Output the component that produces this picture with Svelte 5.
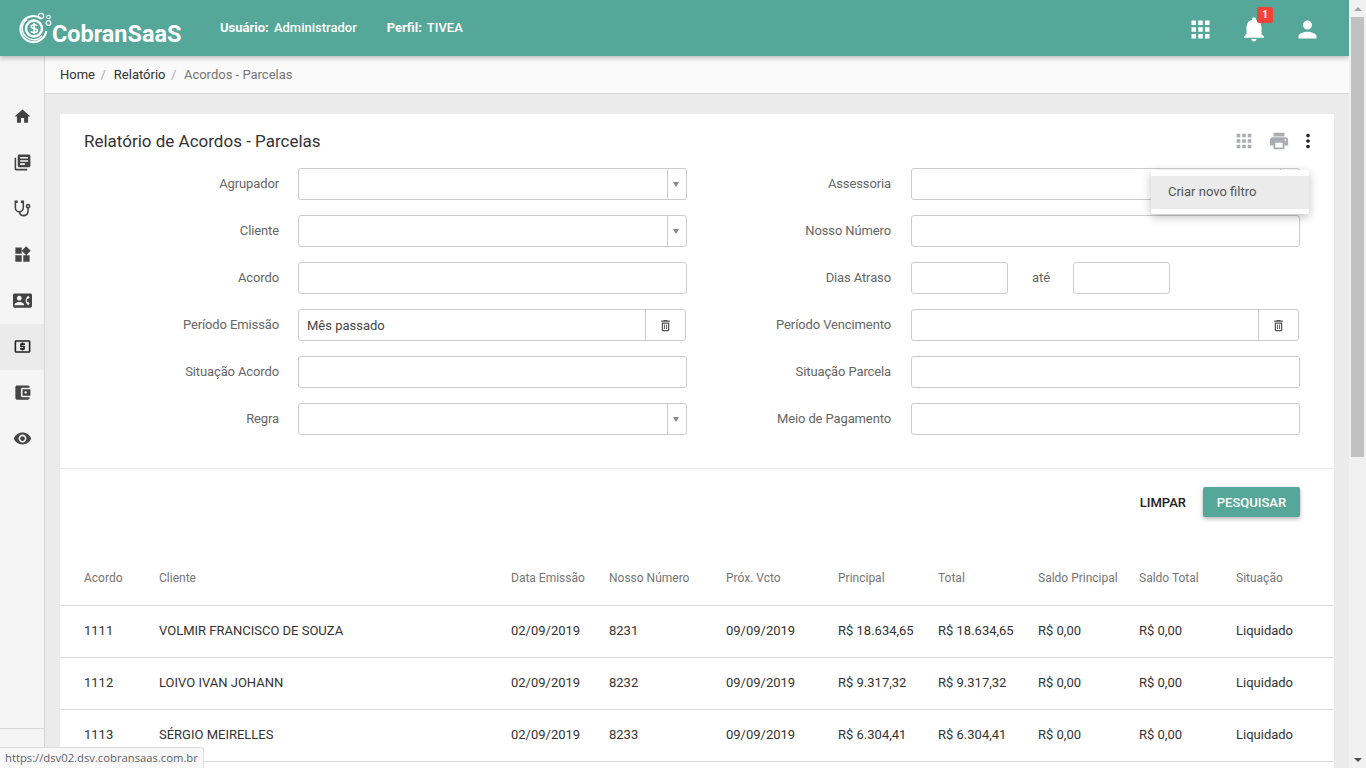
<script>
  const ic = {
    home: 'M10 20v-6h4v6h5v-8h3L12 3 2 12h3v8z',
    books: 'M4 6H2v14c0 1.1.9 2 2 2h14v-2H4V6zm16-4H8c-1.1 0-2 .9-2 2v12c0 1.1.9 2 2 2h12c1.1 0 2-.9 2-2V4c0-1.1-.9-2-2-2zm-1 9H9V9h10v2zm-4 4H9v-2h6v2zm4-8H9V5h10v2z',
    stethoscope: 'M19,8C19.56,8 20,8.43 20,9A1,1 0 0,1 19,10C18.43,10 18,9.55 18,9C18,8.43 18.43,8 19,8M2,2V11C2,13.96 4.19,16.5 7.14,16.91C7.76,19.92 10.42,22 13.5,22A6.5,6.5 0 0,0 20,15.5V11.81C21.16,11.39 22,10.29 22,9A3,3 0 0,0 19,6A3,3 0 0,0 16,9C16,10.29 16.84,11.4 18,11.81V15.41C18,17.91 16,19.91 13.5,19.91C11.5,19.91 9.82,18.7 9.22,16.9C12,16.3 14,13.8 14,11V2H10V5H12V11A4,4 0 0,1 8,15A4,4 0 0,1 4,11V5H6V2H2Z',
    widgets: 'M13 13v8h8v-8h-8zM3 21h8v-8H3v8zM3 3v8h8V3H3zm13.66-1.31L11 7.34 16.66 13l5.66-5.66-5.66-5.65z',
    contact: 'M22 3H2C.9 3 0 3.9 0 5v14c0 1.1.9 2 2 2h20c1.1 0 1.99-.9 1.99-2L24 5c0-1.1-.9-2-2-2zM8 6c1.66 0 3 1.34 3 3s-1.34 3-3 3-3-1.34-3-3 1.34-3 3-3zm6 12H2v-1c0-2 4-3.1 6-3.1s6 1.1 6 3.1v1zm3.85-4h1.64L21 16l-1.99 1.99c-1.31-.98-2.28-2.38-2.73-3.99-.18-.64-.28-1.31-.28-2s.1-1.36.28-2c.45-1.62 1.42-3.01 2.73-3.99L21 8l-1.51 2h-1.64c-.22.63-.35 1.3-.35 2s.13 1.37.35 2z',
    atm: 'M11 17h2v-1h1c.55 0 1-.45 1-1v-3c0-.55-.45-1-1-1h-3v-1h4V8h-2V7h-2v1h-1c-.55 0-1 .45-1 1v3c0 .55.45 1 1 1h3v1H9v2h2v1zm9-13H4c-1.11 0-1.99.89-1.99 2L2 18c0 1.11.89 2 2 2h16c1.11 0 2-.89 2-2V6c0-1.11-.89-2-2-2zm0 14H4V6h16v12z',
    wallet: 'M21 18v1c0 1.1-.9 2-2 2H5c-1.11 0-2-.9-2-2V5c0-1.1.89-2 2-2h14c1.1 0 2 .9 2 2v1h-9c-1.11 0-2 .9-2 2v8c0 1.1.89 2 2 2h9zm-9-2h10V8H12v8zm4-2.5c-.83 0-1.5-.67-1.5-1.5s.67-1.5 1.5-1.5 1.5.67 1.5 1.5-.67 1.5-1.5 1.5z',
    eye: 'M12 4.5C7 4.5 2.73 7.61 1 12c1.73 4.39 6 7.5 11 7.5s9.27-3.11 11-7.5c-1.73-4.39-6-7.5-11-7.5zM12 17c-2.76 0-5-2.24-5-5s2.24-5 5-5 5 2.24 5 5-2.24 5-5 5zm0-8c-1.66 0-3 1.34-3 3s1.34 3 3 3 3-1.34 3-3-1.34-3-3-3z',
    apps: 'M4 8h4V4H4v4zm6 12h4v-4h-4v4zm-6 0h4v-4H4v4zm0-6h4v-4H4v4zm6 0h4v-4h-4v4zm6-10v4h4V4h-4zm-6 4h4V4h-4v4zm6 6h4v-4h-4v4zm0 6h4v-4h-4v4z',
    bell: 'M12 22c1.1 0 2-.9 2-2h-4c0 1.1.89 2 2 2zm6-6v-5c0-3.07-1.64-5.64-4.5-6.32V4c0-.83-.67-1.5-1.5-1.5s-1.5.67-1.5 1.5v.68C7.63 5.36 6 7.92 6 11v5l-2 2v1h16v-1l-2-2z',
    person: 'M12 12c2.21 0 4-1.79 4-4s-1.79-4-4-4-4 1.79-4 4 1.79 4 4 4zm0 2c-2.67 0-8 1.34-8 4v2h16v-2c0-2.66-5.33-4-8-4z',
    print: 'M19 8H5c-1.66 0-3 1.34-3 3v6h4v4h12v-4h4v-6c0-1.66-1.34-3-3-3zm-3 11H8v-5h8v5zm3-7c-.55 0-1-.45-1-1s.45-1 1-1 1 .45 1 1-.45 1-1 1zm-1-9H6v4h12V3z',
    more: 'M12 8c1.1 0 2-.9 2-2s-.9-2-2-2-2 .9-2 2 .9 2 2 2zm0 2c-1.1 0-2 .9-2 2s.9 2 2 2 2-.9 2-2-.9-2-2-2zm0 6c-1.1 0-2 .9-2 2s.9 2 2 2 2-.9 2-2-.9-2-2-2z',
    trash: 'M6 19c0 1.1.9 2 2 2h8c1.1 0 2-.9 2-2V7H6v12zM8 9h8v10H8V9zm1.500 1.500h1.500v7H9.500zm3.500 0h1.500v7H13zM15.500 4l-1-1h-5l-1 1H5v2h14V4z'
  };

  const menu = ['home', 'books', 'stethoscope', 'widgets', 'contact', 'atm', 'wallet', 'eye'];

  const fields = [
    { label: 'Agrupador', type: 'select' },
    { label: 'Assessoria', type: 'select' },
    { label: 'Cliente', type: 'select' },
    { label: 'Nosso Número', type: 'text' },
    { label: 'Acordo', type: 'text' },
    { label: 'Dias Atraso', type: 'range' },
    { label: 'Período Emissão', type: 'clear', value: 'Mês passado' },
    { label: 'Período Vencimento', type: 'clear', value: '' },
    { label: 'Situação Acordo', type: 'text' },
    { label: 'Situação Parcela', type: 'text' },
    { label: 'Regra', type: 'select' },
    { label: 'Meio de Pagamento', type: 'text' }
  ];

  const columns = ['Acordo', 'Cliente', 'Data Emissão', 'Nosso Número', 'Próx. Vcto', 'Principal', 'Total', 'Saldo Principal', 'Saldo Total', 'Situação'];

  const rows = [
    ['1111', 'VOLMIR FRANCISCO DE SOUZA', '02/09/2019', '8231', '09/09/2019', 'R$ 18.634,65', 'R$ 18.634,65', 'R$ 0,00', 'R$ 0,00', 'Liquidado'],
    ['1112', 'LOIVO IVAN JOHANN', '02/09/2019', '8232', '09/09/2019', 'R$ 9.317,32', 'R$ 9.317,32', 'R$ 0,00', 'R$ 0,00', 'Liquidado'],
    ['1113', 'SÉRGIO MEIRELLES', '02/09/2019', '8233', '09/09/2019', 'R$ 6.304,41', 'R$ 6.304,41', 'R$ 0,00', 'R$ 0,00', 'Liquidado']
  ];
</script>

{#snippet icon(name, size)}
  <svg viewBox="0 0 24 24" width={size} height={size} fill="currentColor"><path d={ic[name]} /></svg>
{/snippet}

<div class="page">
  <div class="viewport">
    <header class="topbar">
      <div class="logo">
        <svg class="logo-mark" viewBox="0 0 34 34" width="34" height="34" fill="none" stroke="#fff">
          <path d="M22 7.500A13 13 0 1 0 27.300 20" stroke-width="2" />
          <path d="M8 8.500a11 11 0 0 0 3 19.500 11 11 0 0 0 12-3" stroke-width="1.300" />
          <circle cx="15" cy="17.500" r="8" stroke-width="2.400" />
          <path d="M18.200 14.800c-.8-1.500-6-1.700-6 .8 0 2.700 6.200 1.300 6.200 4 0 2.400-5 2.300-6.600.8M15 11.800v11.400" stroke-width="1.600" />
          <circle cx="22" cy="5" r="2.700" stroke-width="1.200" />
          <circle cx="29.500" cy="6" r="1.800" stroke-width="1.100" />
          <circle cx="29.500" cy="12" r="2.300" stroke-width="1.200" />
        </svg>
        <span>CobranSaaS</span>
      </div>
      <div class="who"><b>Usuário:</b> Administrador</div>
      <div class="who"><b>Perfil:</b> TIVEA</div>
      <div class="top-actions">
        <span class="top-icon">{@render icon('apps', 27)}</span>
        <span class="top-icon">
          {@render icon('bell', 30)}
          <i class="badge">1</i>
        </span>
        <span class="top-icon">{@render icon('person', 27)}</span>
      </div>
    </header>

    <div class="body">
      <nav class="sidebar">
        {#each menu as m}
          <a class="nav-item" class:active={m === 'atm'} href="#top">{@render icon(m, 19)}</a>
        {/each}
      </nav>

      <main class="main">
        <div class="breadcrumb">
          <a href="#top">Home</a><span class="sep">/</span>
          <a href="#top">Relatório</a><span class="sep">/</span>
          <span class="current">Acordos - Parcelas</span>
        </div>

        <div class="content">
          <section class="card">
            <div class="card-head">
              <h1>Relatório de Acordos - Parcelas</h1>
              <div class="card-tools">
                <span class="tool">{@render icon('apps', 22)}</span>
                <span class="tool">{@render icon('print', 22)}</span>
                <span class="tool dark">{@render icon('more', 22)}</span>
              </div>
              <div class="dropdown"><div class="dropdown-item">Criar novo filtro</div></div>
            </div>

            <form class="filters">
              {#each fields as f}
                <div class="field">
                  <span class="field-label">{f.label}</span>
                  {#if f.type === 'select'}
                    <div class="control select">
                      <span class="value"></span>
                      <span class="arrow"></span>
                    </div>
                  {:else if f.type === 'clear'}
                    <div class="control clear">
                      <span class="value">{f.value}</span>
                      <span class="trash">{@render icon('trash', 15)}</span>
                    </div>
                  {:else if f.type === 'range'}
                    <div class="range">
                      <div class="control small"></div>
                      <span class="ate">até</span>
                      <div class="control small"></div>
                    </div>
                  {:else}
                    <div class="control"></div>
                  {/if}
                </div>
              {/each}
            </form>

            <div class="actions">
              <button type="button" class="btn-flat">LIMPAR</button>
              <button type="button" class="btn-primary">PESQUISAR</button>
            </div>

            <table>
              <colgroup>
                <col style="width:99px" /><col style="width:352px" /><col style="width:98px" /><col style="width:117px" /><col style="width:112px" />
                <col style="width:100px" /><col style="width:100px" /><col style="width:101px" /><col style="width:97px" /><col />
              </colgroup>
              <thead>
                <tr>{#each columns as c}<th>{c}</th>{/each}</tr>
              </thead>
              <tbody>
                {#each rows as r}
                  <tr>{#each r as v}<td>{v}</td>{/each}</tr>
                {/each}
                <tr class="filler"><td colspan="10"></td></tr>
              </tbody>
            </table>
          </section>
        </div>
      </main>
    </div>

    <div class="status">https://dsv02.dsv.cobransaas.com.br</div>
  </div>

  <div class="scrollbar">
    <span class="sb-btn"><i class="up"></i></span>
    <div class="sb-track"><div class="sb-thumb"></div></div>
    <span class="sb-btn"><i class="down"></i></span>
  </div>
</div>

<style>
  :global(body) {
    margin: 0;
    font-family: Roboto, "Liberation Sans", sans-serif;
    font-size: 13px;
    color: #212529;
  }
  .page {
    display: flex;
    width: 1366px;
    height: 768px;
    overflow: hidden;
  }
  .viewport {
    position: relative;
    flex: 1;
    min-width: 0;
    display: flex;
    flex-direction: column;
    overflow: hidden;
  }

  .topbar {
    position: relative;
    z-index: 2;
    flex: none;
    height: 56px;
    display: flex;
    align-items: center;
    background: #55a899;
    color: #fff;
    box-shadow: 0 2px 5px rgba(0, 0, 0, 0.26);
    font-weight: 500;
  }
  .logo {
    display: flex;
    align-items: flex-end;
    width: 220px;
    padding-left: 19px;
    box-sizing: border-box;
    height: 34px;
  }
  .logo span {
    font-size: 23.4px;
    font-weight: 700;
    line-height: 22px;
    margin-left: -1px;
  }
  .who {
    margin-right: 30px;
    padding-bottom: 1px;
  }
  .who b {
    font-weight: 700;
    margin-right: 2px;
  }
  .top-actions {
    margin-left: auto;
    display: flex;
    align-items: center;
    gap: 25px;
    padding: 2px 28px 0 0;
  }
  .top-icon {
    position: relative;
    display: flex;
  }
  .badge {
    position: absolute;
    top: -7px;
    right: -4px;
    width: 16px;
    height: 16px;
    border-radius: 2px;
    background: #f44336;
    font: 700 10px/16px Roboto, sans-serif;
    text-align: center;
  }

  .body {
    flex: 1;
    display: flex;
    min-height: 0;
  }
  .sidebar {
    flex: none;
    width: 44px;
    padding-top: 38px;
    background: #f5f5f5;
    border-right: 1px solid #d8d8d8;
    position: relative;
  }
  .sidebar::after {
    content: "";
    position: absolute;
    left: 0;
    right: 0;
    top: 672px;
    border-top: 1px solid #d8d8d8;
  }
  .nav-item {
    display: flex;
    align-items: center;
    justify-content: center;
    height: 46px;
    box-sizing: border-box;
    padding-bottom: 2px;
    color: #444;
  }
  .nav-item.active {
    background: #ebebeb;
    color: #222;
  }

  .main {
    flex: 1;
    min-width: 0;
    display: flex;
    flex-direction: column;
    background: #ebebeb;
  }
  .breadcrumb {
    flex: none;
    height: 38px;
    box-sizing: border-box;
    display: flex;
    align-items: center;
    padding-left: 15px;
    background: #fafafa;
    border-bottom: 1px solid #d8d8d8;
  }
  .breadcrumb a {
    color: #333;
    text-decoration: none;
  }
  .sep {
    color: #aaa;
    margin: 0 8px 0 5.5px;
  }
  .current {
    color: #757575;
    margin-left: -0.5px;
  }

  .content {
    padding: 20px 15px 0;
  }
  .card {
    background: #fff;
  }
  .card-head {
    position: relative;
    height: 54px;
    display: flex;
    align-items: center;
    padding: 0 15px 0 24px;
    box-sizing: border-box;
  }
  h1 {
    margin: 0;
    font-size: 17px;
    font-weight: 400;
    color: #333;
  }
  .card-tools {
    margin-left: auto;
    display: flex;
    align-items: center;
    gap: 13px;
  }
  .tool {
    display: flex;
    color: #a9adb3;
  }
  .tool.dark {
    color: #222;
    margin-left: -6px;
  }
  .dropdown {
    position: absolute;
    z-index: 3;
    top: 56px;
    right: 25px;
    width: 158px;
    padding: 6px 0 5px;
    background: #fff;
    border-radius: 2px;
    box-shadow: 0 3px 10px rgba(0, 0, 0, 0.25);
  }
  .dropdown-item {
    height: 33px;
    line-height: 32px;
    padding-left: 17px;
    background: #ebebeb;
    color: #555;
  }

  .filters {
    display: grid;
    grid-template-columns: 613px 1fr;
    row-gap: 15px;
    padding-bottom: 33px;
    border-bottom: 1px solid #ececec;
  }
  .field {
    display: flex;
    align-items: center;
    gap: 19px;
  }
  .field-label {
    flex: none;
    width: 219px;
    text-align: right;
    color: #666;
    padding-bottom: 2px;
    letter-spacing: -0.12px;
  }
  .field:nth-child(even) .field-label {
    width: 218px;
    margin-right: 1px;
  }
  .control {
    flex: none;
    width: 389px;
    height: 32px;
    box-sizing: border-box;
    display: flex;
    border: 1px solid #ccc;
    border-radius: 3px;
    background: #fff;
  }
  .value {
    flex: 1;
    display: flex;
    align-items: center;
    padding-left: 8px;
    color: #444;
  }
  .select .arrow {
    position: relative;
    width: 18px;
    border-left: 1px solid #ccc;
  }
  .select .arrow::after {
    content: "";
    position: absolute;
    left: 5px;
    top: 13px;
    border: 3.5px solid transparent;
    border-top: 5px solid #888;
    border-bottom: 0;
  }
  .clear {
    width: 388px;
  }
  .trash {
    width: 39px;
    display: flex;
    align-items: center;
    justify-content: center;
    border-left: 1px solid #ccc;
    color: #555;
  }
  .range {
    display: flex;
    align-items: center;
  }
  .control.small {
    width: 97px;
  }
  .ate {
    width: 65px;
    padding: 0 0 2px 1px;
    box-sizing: border-box;
    text-align: center;
    color: #666;
  }

  .actions {
    display: flex;
    justify-content: flex-end;
    align-items: center;
    gap: 17px;
    padding: 18px 34px 0 0;
  }
  button {
    font: 500 13px Roboto, sans-serif;
    border: 0;
    height: 30px;
    padding: 0;
    cursor: pointer;
  }
  .btn-flat {
    background: none;
    color: #222;
  }
  .btn-primary {
    width: 97px;
    background: #55a899;
    color: #fff;
    border-radius: 2px;
    box-shadow: 0 2px 4px rgba(0, 0, 0, 0.3);
  }

  table {
    width: 100%;
    margin-top: 34px;
    table-layout: fixed;
    border-collapse: collapse;
  }
  th, td {
    text-align: left;
    padding: 0;
    border-bottom: 1px solid #ddd;
  }
  th:first-child, td:first-child {
    padding-left: 24px;
  }
  th {
    height: 54px;
    font-weight: 400;
    font-size: 12px;
    color: #757575;
  }
  td {
    height: 49px;
    padding-bottom: 2px;
    color: #333;
  }
  .filler td {
    border: 0;
    height: 60px;
  }

  .status {
    position: absolute;
    z-index: 4;
    left: 0;
    bottom: 0;
    width: 204px;
    height: 21px;
    box-sizing: border-box;
    padding-left: 5px;
    background: #f8f8f8;
    border: 1px solid #ddd;
    border-width: 1px 1px 0 0;
    border-top-right-radius: 3px;
    font: 11.25px/20px "Open Sans", sans-serif;
    color: #5f6368;
    white-space: nowrap;
  }

  .scrollbar {
    flex: none;
    width: 17px;
    display: flex;
    flex-direction: column;
    background: #f1f1f1;
  }
  .sb-btn {
    flex: none;
    height: 17px;
    display: flex;
    align-items: center;
    justify-content: center;
  }
  .sb-btn i {
    border: 4px solid transparent;
  }
  .sb-btn .up {
    border-top: 0;
    border-bottom: 4px solid #a3a3a3;
  }
  .sb-btn .down {
    border-bottom: 0;
    border-top: 4px solid #505050;
  }
  .sb-track {
    flex: 1;
  }
  .sb-thumb {
    height: 440px;
    margin: 0 2px;
    background: #c1c1c1;
  }
</style>
